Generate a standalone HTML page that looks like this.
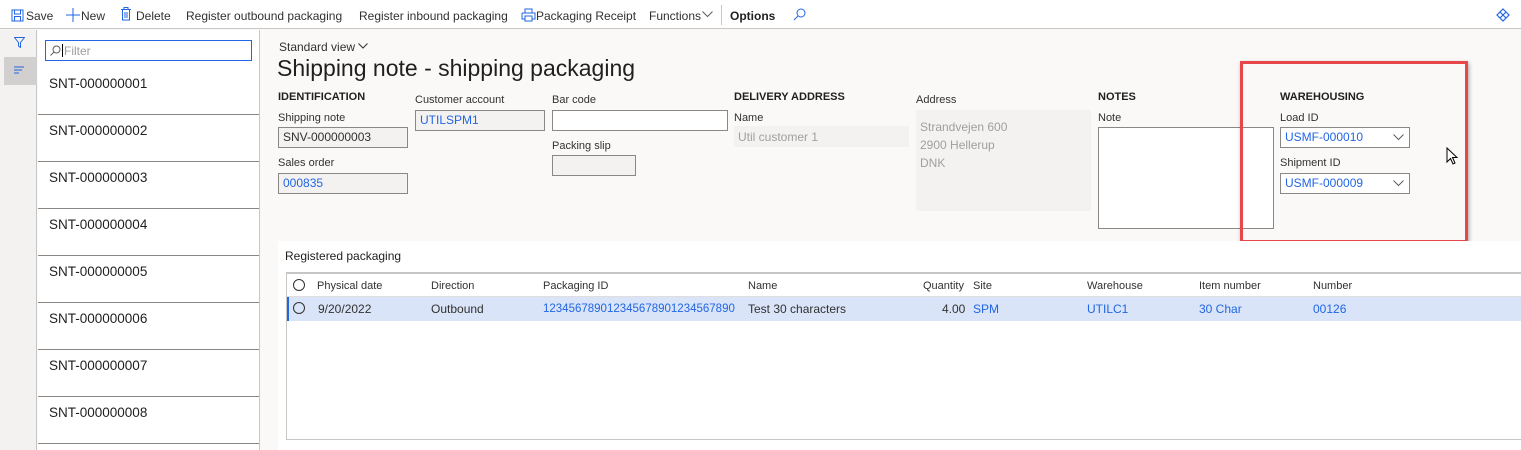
<!DOCTYPE html>
<html><head><style>
*{margin:0;padding:0;box-sizing:border-box}
body{width:1521px;height:450px;overflow:hidden;font-family:"Liberation Sans",sans-serif;font-size:12px;color:#323130;background:#faf9f8;position:relative}
.a{position:absolute;white-space:nowrap}
.tb{left:0;top:0;width:1521px;height:29px;background:#fff;border-bottom:1px solid #c8c6c4}
.lbl{font-size:11px;color:#323130}
.hd{font-size:11px;font-weight:bold;color:#201f1e}
.inp{border:1px solid #8a8886;background:#f3f2f1;height:21px;padding:2px 4px;font-size:12px}
.lnk{color:#2266e3}
.li{left:38px;width:221px;height:47px;border-bottom:1px solid #8a8886;padding:8px 0 0 11px;font-size:13.5px;color:#201f1e}
.col{top:280px;font-size:11px}
.cell{top:302px;font-size:12px}
</style></head><body>
<div class="a tb"></div>
<svg class="a" style="left:11px;top:9px" width="13" height="13"><rect x="1" y="1" width="11" height="11" fill="none" stroke="#2266e3"/><rect x="3.5" y="1" width="6" height="4" fill="none" stroke="#2266e3"/><rect x="3.5" y="7.5" width="6" height="4.5" fill="none" stroke="#2266e3"/></svg>
<div class="a" style="left:26px;top:9px">Save</div>
<svg class="a" style="left:66px;top:8px" width="14" height="14"><path d="M7 0V14M0 7H14" stroke="#2266e3"/></svg>
<div class="a" style="left:81px;top:9px">New</div>
<svg class="a" style="left:120px;top:7px" width="12" height="14"><path d="M1 2.5H11M4 2.5V0.5H8V2.5M2.5 2.5V13H9.5V2.5M5 5V11M7 5V11" fill="none" stroke="#2266e3"/></svg>
<div class="a" style="left:136px;top:9px">Delete</div>
<div class="a" style="left:186px;top:9px">Register outbound packaging</div>
<div class="a" style="left:359px;top:9px">Register inbound packaging</div>
<svg class="a" style="left:521px;top:8px" width="15" height="14"><path d="M4 5V1H11V5M1 5H14V11H11M4 11H1V5M4 8H11V13H4Z" fill="none" stroke="#2266e3"/></svg>
<div class="a" style="left:536px;top:9px">Packaging Receipt</div>
<div class="a" style="left:649px;top:9px">Functions</div>
<svg class="a" style="left:702px;top:11px" width="11" height="7"><path d="M0.5 0.5L5.5 5.5L10.5 0.5" fill="none" stroke="#605e5c"/></svg>
<div class="a" style="left:721px;top:5px;width:1px;height:20px;background:#c8c6c4"></div>
<div class="a" style="left:730px;top:9px;font-weight:bold;color:#201f1e">Options</div>
<svg class="a" style="left:793px;top:8px" width="13" height="13"><circle cx="8" cy="5" r="4" fill="none" stroke="#2266e3"/><path d="M5 8L1 12" stroke="#2266e3"/></svg>
<svg class="a" style="left:1496px;top:8px" width="14" height="14"><path d="M7 1L13 7L7 13L1 7Z M4 4L10 10M10 4L4 10" fill="none" stroke="#2266e3" stroke-width="1.2"/></svg>

<div class="a" style="left:0;top:30px;width:37px;height:420px;background:#f3f2f1;border-right:1px solid #c8c6c4"></div>
<svg class="a" style="left:14px;top:37px" width="11" height="11"><path d="M0.5 0.5H10.5L6.5 5.5V10.5L4.5 9V5.5Z" fill="none" stroke="#2266e3"/></svg>
<div class="a" style="left:4px;top:57px;width:33px;height:28px;background:#d2d0ce"></div>
<svg class="a" style="left:14px;top:66px" width="11" height="9"><path d="M0 1H10M0 4H8M0 7H5" stroke="#2266e3"/></svg>
<div class="a" style="left:38px;top:30px;width:222px;height:420px;background:#fff;border-right:1px solid #c8c6c4"></div>
<div class="a" style="left:45px;top:40px;width:207px;height:21px;border:1px solid #2266e3;background:#fff"></div>
<svg class="a" style="left:50px;top:45px" width="11" height="11"><circle cx="6.5" cy="4.5" r="3.5" fill="none" stroke="#605e5c"/><path d="M4 7L0.5 10.5" stroke="#605e5c"/></svg>
<div class="a" style="left:62px;top:44px;width:1px;height:13px;background:#000"></div>
<div class="a" style="left:64px;top:44px;color:#a19f9d">Filter</div>
<div class="a li" style="top:68px;height:47px;">SNT-000000001</div>
<div class="a li" style="top:115px">SNT-000000002</div>
<div class="a li" style="top:162px">SNT-000000003</div>
<div class="a li" style="top:209px">SNT-000000004</div>
<div class="a li" style="top:256px">SNT-000000005</div>
<div class="a li" style="top:303px">SNT-000000006</div>
<div class="a li" style="top:350px">SNT-000000007</div>
<div class="a li" style="top:397px">SNT-000000008</div>

<div class="a" style="left:279px;top:40px;font-size:12px">Standard view</div>
<svg class="a" style="left:358px;top:43px" width="10" height="6"><path d="M0.5 0.5L5 5L9.5 0.5" fill="none" stroke="#323130"/></svg>
<div class="a" style="left:277px;top:55px;font-size:23px;color:#201f1e">Shipping note - shipping packaging</div>

<div class="a hd" style="left:278px;top:91px">IDENTIFICATION</div>
<div class="a lbl" style="left:278px;top:112px">Shipping note</div>
<div class="a inp" style="left:278px;top:127px;width:130px">SNV-000000003</div>
<div class="a lbl" style="left:278px;top:157px">Sales order</div>
<div class="a inp lnk" style="left:278px;top:173px;width:130px">000835</div>

<div class="a lbl" style="left:415px;top:94px">Customer account</div>
<div class="a inp lnk" style="left:415px;top:110px;width:130px">UTILSPM1</div>

<div class="a lbl" style="left:552px;top:94px">Bar code</div>
<div class="a inp" style="left:552px;top:110px;width:176px;background:#fff"></div>
<div class="a lbl" style="left:552px;top:140px">Packing slip</div>
<div class="a inp" style="left:552px;top:155px;width:84px"></div>

<div class="a hd" style="left:734px;top:91px">DELIVERY ADDRESS</div>
<div class="a lbl" style="left:734px;top:112px">Name</div>
<div class="a" style="left:734px;top:126px;width:175px;height:21px;background:#f3f2f1;color:#a19f9d;padding:4px 4px">Util customer 1</div>

<div class="a lbl" style="left:916px;top:94px">Address</div>
<div class="a" style="left:916px;top:110px;width:175px;height:101px;background:#f3f2f1;color:#a19f9d;padding:8px 4px;line-height:18px;white-space:normal">Strandvejen 600<br>2900 Hellerup<br>DNK</div>

<div class="a hd" style="left:1098px;top:91px">NOTES</div>
<div class="a lbl" style="left:1098px;top:112px">Note</div>
<div class="a" style="left:1098px;top:127px;width:176px;height:102px;border:1px solid #8a8886;background:#fff"></div>

<div class="a hd" style="left:1280px;top:91px">WAREHOUSING</div>
<div class="a lbl" style="left:1280px;top:112px">Load ID</div>
<div class="a inp lnk" style="left:1280px;top:127px;width:130px;background:#fff">USMF-000010</div>
<svg class="a" style="left:1393px;top:134px" width="11" height="7"><path d="M0.5 0.5L5.5 5.5L10.5 0.5" fill="none" stroke="#605e5c"/></svg>
<div class="a lbl" style="left:1280px;top:157px">Shipment ID</div>
<div class="a inp lnk" style="left:1280px;top:173px;width:130px;background:#fff">USMF-000009</div>
<svg class="a" style="left:1393px;top:180px" width="11" height="7"><path d="M0.5 0.5L5.5 5.5L10.5 0.5" fill="none" stroke="#605e5c"/></svg>
<div class="a" style="left:1240px;top:61px;width:228px;height:182px;border:3px solid #e8474a;box-shadow:1px 2px 4px rgba(0,0,0,.35)"></div>
<svg class="a" style="left:1446px;top:147px" width="12" height="19"><path d="M1 1V15L4.5 11.5L7 17L9 16L6.5 10.5H11Z" fill="#fff" stroke="#000"/></svg>

<div class="a" style="left:278px;top:241px;width:1243px;height:209px;background:#fff"></div>
<div class="a" style="left:285px;top:249px;font-size:12px;color:#201f1e">Registered packaging</div>
<div class="a" style="left:286px;top:272px;width:1235px;height:168px;border:1px solid #c8c6c4;border-top:2px solid #c8c6c4;border-right:none"></div>
<div class="a" style="left:287px;top:296px;width:1234px;height:1px;background:#e1dfdd"></div>
<div class="a" style="left:287px;top:297px;width:1234px;height:24px;background:#d9e4f8;border-left:2px solid #2266e3"></div>
<div class="a" style="left:293px;top:279px;width:12px;height:12px;border:1px solid #323130;border-radius:50%"></div>
<div class="a" style="left:293px;top:302px;width:12px;height:12px;border:1px solid #323130;border-radius:50%"></div>
<div class="a col" style="left:317px">Physical date</div>
<div class="a col" style="left:431px">Direction</div>
<div class="a col" style="left:543px">Packaging ID</div>
<div class="a col" style="left:748px">Name</div>
<div class="a col" style="left:923px">Quantity</div>
<div class="a col" style="left:973px">Site</div>
<div class="a col" style="left:1087px">Warehouse</div>
<div class="a col" style="left:1199px">Item number</div>
<div class="a col" style="left:1313px">Number</div>
<div class="a cell" style="left:318px">9/20/2022</div>
<div class="a cell" style="left:431px">Outbound</div>
<div class="a cell lnk" style="left:543px;top:303px;font-size:11.5px">123456789012345678901234567890</div>
<div class="a cell" style="left:748px">Test 30 characters</div>
<div class="a cell" style="left:942px">4.00</div>
<div class="a cell lnk" style="left:973px">SPM</div>
<div class="a cell lnk" style="left:1087px">UTILC1</div>
<div class="a cell lnk" style="left:1199px">30 Char</div>
<div class="a cell lnk" style="left:1313px">00126</div>
</body></html>
